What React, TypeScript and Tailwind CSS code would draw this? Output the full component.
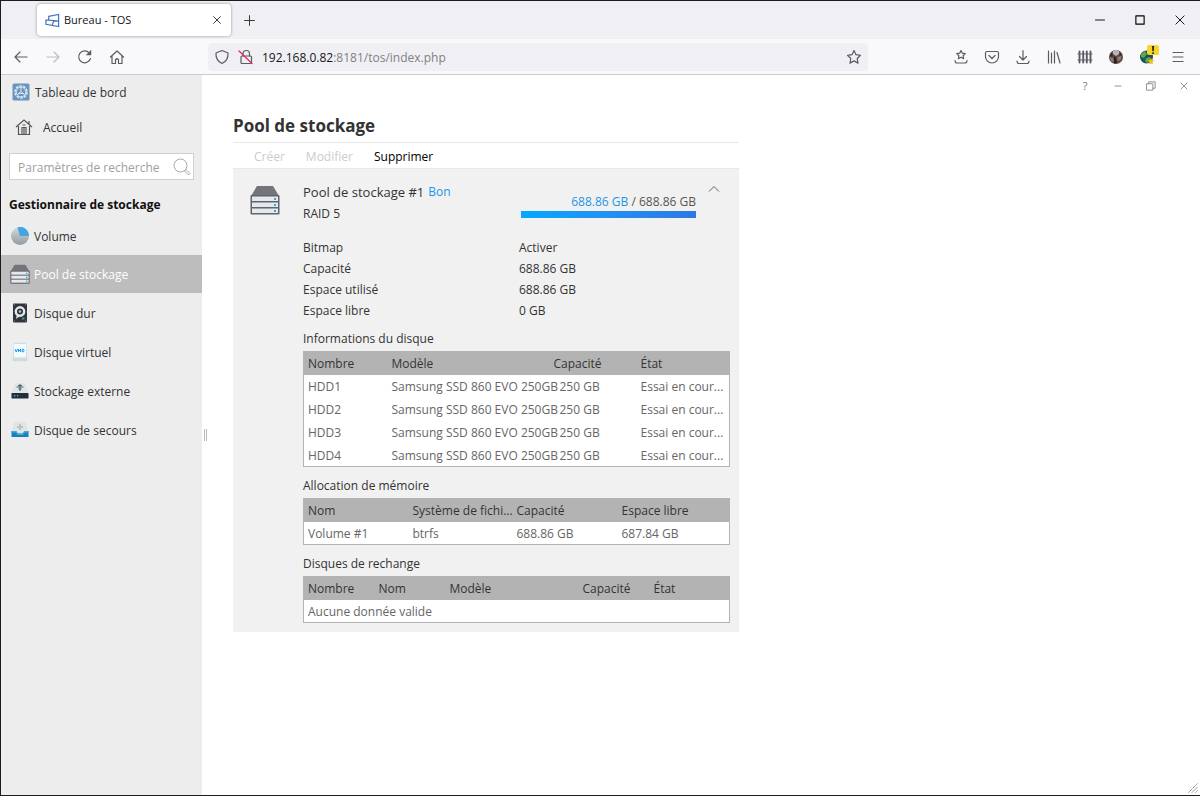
import type { ReactNode } from "react";

type Column = { label: string; className: string; cellClass?: string };

const DISKS = ["HDD1", "HDD2", "HDD3", "HDD4"];

const DETAILS = [
  ["Bitmap", "Activer"],
  ["Capacité", "688.86 GB"],
  ["Espace utilisé", "688.86 GB"],
  ["Espace libre", "0 GB"],
];

const NAV = [
  { label: "Volume", icon: <VolumeIcon /> },
  { label: "Pool de stockage", icon: <ServerIcon size={20} />, active: true },
  { label: "Disque dur", icon: <HddIcon /> },
  { label: "Disque virtuel", icon: <VhdIcon /> },
  { label: "Stockage externe", icon: <ExternalIcon /> },
  { label: "Disque de secours", icon: <SpareIcon /> },
];

function Stroke({ children, size = 16, className = "text-[#5b5b66]" }: { children: ReactNode; size?: number; className?: string }) {
  return (
    <svg viewBox="0 0 16 16" width={size} height={size} fill="none" stroke="currentColor" strokeWidth="1.2" strokeLinecap="round" strokeLinejoin="round" className={`shrink-0 ${className}`}>
      {children}
    </svg>
  );
}

function ServerIcon({ size }: { size: number }) {
  return (
    <svg viewBox="0 0 30 30" width={size} height={size} className="shrink-0">
      <path d="M7 1h16l6 10H1z" fill="#74747d" />
      <rect x="0.5" y="10" width="29" height="19.5" rx="1" fill="#62636c" />
      {[11.5, 17.5, 23.5].map((y) => (
        <g key={y}>
          <rect x="2" y={y} width="26" height="4.5" fill="#e3e9ec" />
          <rect x="24" y={y + 1.5} width="2" height="2" fill="#38a9e0" />
        </g>
      ))}
    </svg>
  );
}

function VolumeIcon() {
  return (
    <svg viewBox="0 0 20 20" width="20" height="20" className="shrink-0">
      <defs>
        <linearGradient id="disc" x1="0" y1="0" x2="0" y2="1">
          <stop offset="0" stopColor="#d3dadd" />
          <stop offset="1" stopColor="#929da1" />
        </linearGradient>
      </defs>
      <circle cx="10" cy="10" r="9" fill="url(#disc)" />
      <path d="M10 10L7.5 1.3A9 9 0 0 1 19 10z" fill="#43a5e2" />
    </svg>
  );
}

function HddIcon() {
  return (
    <svg viewBox="0 0 20 20" width="20" height="20" className="shrink-0">
      <rect x="3" y="0.5" width="14" height="19" rx="1" fill="#30343d" />
      <circle cx="10" cy="8.5" r="4.2" fill="none" stroke="#e3e7e9" strokeWidth="2.4" />
      <circle cx="10" cy="8.5" r="1.3" fill="#b8bfc2" />
      <path d="M7 11l-1 5 4-3" fill="#e3e7e9" />
      <rect x="12" y="14.5" width="2.5" height="2" fill="#47987c" />
      <path d="M4 1.8h1M15 1.8h1M4 18h1M15 18h1" stroke="#8c929a" />
    </svg>
  );
}

function VhdIcon() {
  return (
    <svg viewBox="0 0 20 20" width="20" height="20" className="shrink-0">
      <path d="M4 .7h12l1.5 17.5-1 1h-13l-1-1z" fill="#cfdcdd" />
      <rect x="4" y="2" width="12" height="13.5" rx="1" fill="#f2fbfd" />
      <path d="M5 7l1.2 3L7.5 7M8.5 7v3M8.5 8.5h2M10.5 7v3M12.2 7.2v2.6h1.2q1.4-1.3 0-2.6z" fill="none" stroke="#159bea" strokeWidth="1" />
    </svg>
  );
}

function ExternalIcon() {
  return (
    <svg viewBox="0 0 20 20" width="20" height="20" className="shrink-0">
      <path d="M4 4l2-2h8l2 2 2.5 9h-17z" fill="#e1e5e5" />
      <path d="M10 3v7M6.5 6h7M8 4.5h4M8.5 8h3" fill="none" stroke="#53636f" strokeWidth="1.1" />
      <rect x="1.5" y="12" width="17" height="5.5" rx="0.5" fill="#252d38" />
      <path d="M4 14.7h1.3M7 14.7h1.3" stroke="#29b9df" strokeWidth="1.5" />
    </svg>
  );
}

function SpareIcon() {
  return (
    <svg viewBox="0 0 20 20" width="20" height="20" className="shrink-0">
      <path d="M4 3l2-1h8l2 1 3 10H1z" fill="#e1e4e4" />
      <path d="M10 4v6M7 7h6" stroke="#bdc1c2" strokeWidth="1.8" />
      <path d="M1.5 11H6l2 2.5h4.500l2-2.500h4v6h-17z" fill="#1681bb" />
      <path d="M1.5 11H6l2 2.5h4.500l2-2.500h4v1.500H15L13 15H7.500l-2-2.500h-4z" fill="#48a9d9" />
    </svg>
  );
}

function BrowserTabs() {
  return (
    <header className="flex h-[38px] items-center bg-[#f0f0f4] pl-9">
      <div className="flex h-8 w-[194px] items-center rounded bg-white pl-2 pr-2 shadow-[0_0_3px_rgba(0,0,0,0.4)]">
        <svg viewBox="0 0 16 16" width="15" height="15" fill="none" stroke="#4274bd" strokeWidth="1.3" className="mr-1 shrink-0">
          <path d="M4 3.5L14.500 1.500v13L1 12V7.500h3zM4 7.500l10.500 1.200M9.500 8.200l-2 5" />
        </svg>
        <span className="flex-1 text-[11px] text-[#15141a]">Bureau - TOS</span>
        <button aria-label="Fermer l’onglet"><Stroke size={12} className="text-[#222]"><path d="M3.5 3.5l9 9M12.5 3.5l-9 9" /></Stroke></button>
      </div>
      <button aria-label="Nouvel onglet" className="ml-3"><Stroke size={13} className="text-[#333]"><path d="M8 2v12M2 8h12" /></Stroke></button>
      <div className="ml-auto flex items-center gap-7 pr-3.5">
        <button aria-label="Réduire"><Stroke size={12} className="text-black"><path d="M2 8h12" /></Stroke></button>
        <button aria-label="Agrandir"><Stroke size={12} className="text-black"><path d="M2.5 2.5h11v11h-11z" strokeWidth="1.5" /></Stroke></button>
        <button aria-label="Fermer"><Stroke size={12} className="text-black"><path d="M2.5 2.5l11 11M13.5 2.5l-11 11" /></Stroke></button>
      </div>
    </header>
  );
}

function BrowserToolbar() {
  return (
    <div className="flex h-9 items-center border-b border-[#cccccf] bg-[#f9f9fb] pl-3 pr-3.5">
      <div className="flex w-[195px] shrink-0 items-center gap-4">
        <button aria-label="Précédent"><Stroke><path d="M14 8H2.5M7 3L2 8l5 5" /></Stroke></button>
        <button aria-label="Suivant"><Stroke className="text-[#bdbdc3]"><path d="M2 8h11.5M9 3l5 5-5 5" /></Stroke></button>
        <button aria-label="Actualiser"><Stroke><path d="M13.5 9.5a6 6 0 1 1-1.3-5.7" /><path d="M14 1.5V6H9.5z" fill="currentColor" strokeWidth="0.5" /></Stroke></button>
        <button aria-label="Accueil"><Stroke><path d="M1.5 8L8 2l6.5 6M3 7v7.5h3.500V10.500q1.500-1.500 3 0v4H13V7" /></Stroke></button>
      </div>
      <div className="flex h-7 w-[660px] min-w-0 items-center rounded bg-[#f0f0f4] pl-1.5 pr-1.5">
        <Stroke><path d="M8 1.5L14 4q.5 7.500-6 10.500Q1.500 11.500 2 4z" /></Stroke>
        <span className="ml-2"><Stroke><rect x="3" y="7" width="10.5" height="7.5" rx="1" /><path d="M5 7V5q0-3.500 3.300-3.500T11.500 5v2" /><path d="M1 2l13 12.5" stroke="#e22850" /></Stroke></span>
        <span className="ml-2 flex-1 pt-0.5 text-[12px] text-[#808085]"><span className="text-[#15141a]">192.168.0.82</span>:8181/tos/index.php</span>
        <button aria-label="Marquer cette page"><Stroke><path d="M8 1.5l2 4.200 4.500.6-3.300 3.200.8 4.600L8 11.900l-4 2.200.8-4.600L1.500 6.300 6 5.700z" /></Stroke></button>
      </div>
      <div className="ml-auto flex items-center gap-[15px]">
        <button aria-label="Marque-pages"><Stroke><path d="M8 1.500l1.300 2.700 3 .4-2.200 2.100.5 3L8 8.300 5.400 9.700l.5-3-2.200-2.100 3-.4zM2 11.500q0 2.500 2 2.500h8q2 0 2-2.500" /></Stroke></button>
        <button aria-label="Pocket"><Stroke><path d="M3 2.500h10q1.500 0 1.500 1.500v3.500a6.500 6.500 0 0 1-13 0V4q0-1.500 1.500-1.500zM5 6.500l3 3 3-3" /></Stroke></button>
        <button aria-label="Téléchargements"><Stroke><path d="M8 1.500v9M4.500 7.500L8 11l3.500-3.500M2 12q0 2.500 2 2.500h8q2 0 2-2.500" /></Stroke></button>
        <button aria-label="Bibliothèque"><Stroke><path d="M2.500 2v12M5.500 4v10M8.500 2v12M11 3.500l3 10.500" /></Stroke></button>
        <button aria-label="Conteneurs"><Stroke><path d="M2.500 2.500v11M6.200 2.500v11M9.800 2.500v11M13.500 2.500v11" strokeWidth="1.9" /><path d="M1 5h14M1 11h14" strokeWidth="0.9" /></Stroke></button>
        <button aria-label="Profil">
          <svg viewBox="0 0 16 16" width="16" height="16">
            <circle cx="8" cy="8" r="7" fill="#5c4845" />
            <path d="M5 2q3-2 6 0v3L8 7 5 5z" fill="#b9b4b8" />
            <path d="M2 8l3 1 1 4-3-1zM9.500 8l4-1-1 4-3 1z" fill="#9a796f" />
            <path d="M6 7l2 2 1 5-3 .5z" fill="#251f22" />
            <path d="M3 4l2 2-1 2-2-1zM12 4l1.500 2-2 1z" fill="#33282a" />
          </svg>
        </button>
        <button aria-label="Extension, une alerte" className="relative">
          <svg viewBox="0 0 16 16" width="16" height="16">
            <circle cx="7.5" cy="8" r="6.5" fill="#174f64" />
            <path d="M2 5l4-3 2 3-3 4-3-1zM7 9l4-1 1 4-4 2-2-2z" fill="#65a63c" />
            <path d="M12 9l1 2 2.500.5-2 1.500.5 2.500-2-1-2 1 .5-2.500L9 11.500l2-.5z" fill="#f4be16" />
          </svg>
          <span className="absolute -right-1 -top-1 flex h-[10px] w-3 items-center justify-center rounded-xs bg-[#f8d52a] text-[10px] font-bold leading-none text-black">!</span>
        </button>
        <button aria-label="Menu"><Stroke><path d="M3 3.500h10M3 8h10M3 12.500h10" /></Stroke></button>
      </div>
    </div>
  );
}

function Sidebar() {
  return (
    <aside className="w-[201px] shrink-0 bg-[#ededed] text-[12px] text-[#333]">
      <div className="flex h-[34px] items-center gap-[5px] pl-[11px]">
        <svg viewBox="0 0 18 18" width="18" height="18">
          <rect x="0.5" y="0.5" width="17" height="17" rx="1.5" fill="#6894bd" />
          <circle cx="9" cy="9" r="6" fill="none" stroke="#dce8f2" strokeWidth="1.6" strokeDasharray="2.7 1" />
          <circle cx="9" cy="9" r="4.8" fill="none" stroke="#dce8f2" />
          <path d="M9 4.5v4L5 12M9 8.500l4 3.500M6 10.500h6" fill="none" stroke="#dce8f2" />
        </svg>
        <span className="pt-0.5">Tableau de bord</span>
      </div>
      <a href="#accueil" className="flex h-9 items-center gap-2.5 pl-[14px]">
        <svg viewBox="0 0 18 18" width="18" height="18" fill="none" stroke="#555" strokeWidth="1.2">
          <path d="M1 9l8-7 8 7M3.500 8v8.500h11V8M7 16V9.500h4V16M9 10v6M7.500 7h3M14 6V3" />
        </svg>
        <span className="pt-0.5">Accueil</span>
      </a>
      <div className="mx-2 mt-2 flex h-[27px] items-center border border-[#cfcfcf] bg-white pl-2 pr-[2px]">
        <input aria-label="Paramètres de recherche" placeholder="Paramètres de recherche" className="min-w-0 flex-1 pt-0.5 outline-none placeholder:text-[#a0a0a0]" />
        <svg viewBox="0 0 18 18" width="18" height="18" fill="none" stroke="#aaa" className="shrink-0">
          <circle cx="7.5" cy="7.5" r="6.5" />
          <path d="M12 12.500l1-1 4 4-1.500 1.500-4-4z" />
        </svg>
      </div>
      <h2 className="mt-[11px] flex h-[26px] items-center pl-2 pt-0.5 font-bold text-[#111]">Gestionnaire de stockage</h2>
      <nav>
        {NAV.map((item) => (
          <a key={item.label} href="#pool" className={`flex h-[38px] items-center gap-1 pl-[9px] not-last:mb-px first:mb-0 ${item.active ? "bg-[#bdbdbd] text-white" : ""}`}>
            {item.icon}
            <span className="pt-0.5">{item.label}</span>
          </a>
        ))}
      </nav>
    </aside>
  );
}

function DataTable({ title, columns, rows }: { title: string; columns: Column[]; rows: string[][] }) {
  return (
    <section className="mb-[7px]">
      <h3 className="flex h-6 items-center">{title}</h3>
      <table className="w-full table-fixed border-collapse border border-[#b3b3b3] bg-white text-left">
        <thead className="bg-[#b3b3b3]">
          <tr className="h-[23px]">
            {columns.map((c) => (
              <th key={c.label} className={`whitespace-nowrap p-0 pl-1 pt-0.5 font-normal ${c.className}`}>{c.label}</th>
            ))}
          </tr>
        </thead>
        <tbody className="text-[#666]">
          {rows.map((row) => (
            <tr key={row[0]} className="h-[23px]">
              {row.map((cell, i) => (
                <td key={i} colSpan={row.length === 1 ? columns.length : 1} className={`whitespace-nowrap p-0 pt-0.5 ${columns[i].cellClass ?? "pl-1"}`}>{cell}</td>
              ))}
            </tr>
          ))}
        </tbody>
      </table>
    </section>
  );
}

function PoolCard() {
  return (
    <article className="bg-[#f1f1f1] pb-0.5 pl-[70px] pr-[9px]">
      <div className="relative flex h-[68px] pt-3">
        <span className="absolute -left-[53px] top-4"><ServerIcon size={30} /></span>
        <div className="flex-1 leading-[22px]">
          <h2 className="flex gap-1"><span className="text-[13px]">Pool de stockage #1</span><span className="text-[#1e96e8]">Bon</span></h2>
          <p>RAID 5</p>
        </div>
        <div className="mr-2.5 w-[175px] pt-3">
          <p className="text-right leading-[18px] text-[#555]"><span className="text-[#1e96e8]">688.86 GB</span> / 688.86 GB</p>
          <div className="h-[7px] bg-linear-to-r from-[#00a8ff] to-[#2c78e4]" />
        </div>
        <button aria-label="Replier" className="mr-2 flex h-4 w-4 items-center justify-center">
          <svg viewBox="0 0 12 8" width="12" height="8" fill="none" stroke="#666"><path d="M1 6.5l5-5 5 5" /></svg>
        </button>
      </div>
      <dl className="grid grid-cols-[216px_1fr] leading-[21px]">
        {DETAILS.map(([label, value]) => (
          <div key={label} className="contents">
            <dt>{label}</dt>
            <dd>{value}</dd>
          </div>
        ))}
      </dl>
      <div className="pt-[6px]">
        <DataTable
          title="Informations du disque"
          columns={[
            { label: "Nombre", className: "w-[84px]" },
            { label: "Modèle", className: "w-[162px]" },
            { label: "Capacité", className: "w-[87px]", cellClass: "pl-2.5" },
            { label: "État", className: "" },
          ]}
          rows={DISKS.map((d) => [d, "Samsung SSD 860 EVO 250GB", "250 GB", "Essai en cour..."])}
        />
        <DataTable
          title="Allocation de mémoire"
          columns={[
            { label: "Nom", className: "w-[105px]" },
            { label: "Système de fichi...", className: "w-[104px]" },
            { label: "Capacité", className: "w-[105px]" },
            { label: "Espace libre", className: "" },
          ]}
          rows={[["Volume #1", "btrfs", "688.86 GB", "687.84 GB"]]}
        />
        <DataTable
          title="Disques de rechange"
          columns={[
            { label: "Nombre", className: "w-[71px]" },
            { label: "Nom", className: "w-[71px]" },
            { label: "Modèle", className: "w-[133px]" },
            { label: "Capacité", className: "w-[71px]" },
            { label: "État", className: "" },
          ]}
          rows={[["Aucune donnée valide"]]}
        />
      </div>
    </article>
  );
}

export default function App() {
  return (
    <div className="flex min-h-screen flex-col border-b border-l border-t border-[#1c1b22] bg-white font-['Open_Sans','Noto_Sans',sans-serif]">
      <BrowserTabs />
      <BrowserToolbar />
      <div className="relative flex flex-1">
        <Sidebar />
        <div className="flex items-center pl-0.5">
          <span className="h-3 w-[3px] border-x border-[#bbb]" />
        </div>
        <main className="min-w-0 flex-1 pl-[26px] text-[12px] text-[#333]">
          <div className="flex h-[22px] items-center justify-end gap-[21px] pr-[10px]">
            <button className="w-3 text-[11px] text-[#777]">?</button>
            <button aria-label="Réduire la fenêtre"><Stroke size={12} className="text-[#888]"><path d="M4 8h8" /></Stroke></button>
            <button aria-label="Restaurer la fenêtre"><Stroke size={12} className="text-[#888]"><path d="M2.5 5h8v8.500h-8zM5 5V2.500h8.500V11h-3" /></Stroke></button>
            <button aria-label="Fermer la fenêtre"><Stroke size={12} className="text-[#888]"><path d="M4 4l8 8M12 4l-8 8" /></Stroke></button>
          </div>
          <div className="max-w-[506px]">
            <h1 className="flex h-[45px] items-center pt-3 text-[17px] font-bold">Pool de stockage</h1>
            <div className="flex h-[27px] items-center gap-[21px] border-y border-[#e8e8e8] pl-[21px] pt-0.5">
              <button disabled className="text-[#ccc]">Créer</button>
              <button disabled className="text-[#ccc]">Modifier</button>
              <button className="text-black">Supprimer</button>
            </div>
            <PoolCard />
          </div>
        </main>
        <svg viewBox="0 0 10 10" width="10" height="10" stroke="#777" strokeDasharray="1.5 0.5" className="absolute bottom-0.5 right-0.5">
          <path d="M0.5 9.5l9-9M4 9.5L9.500 4M7.500 9.500l2-2" />
        </svg>
      </div>
    </div>
  );
}
